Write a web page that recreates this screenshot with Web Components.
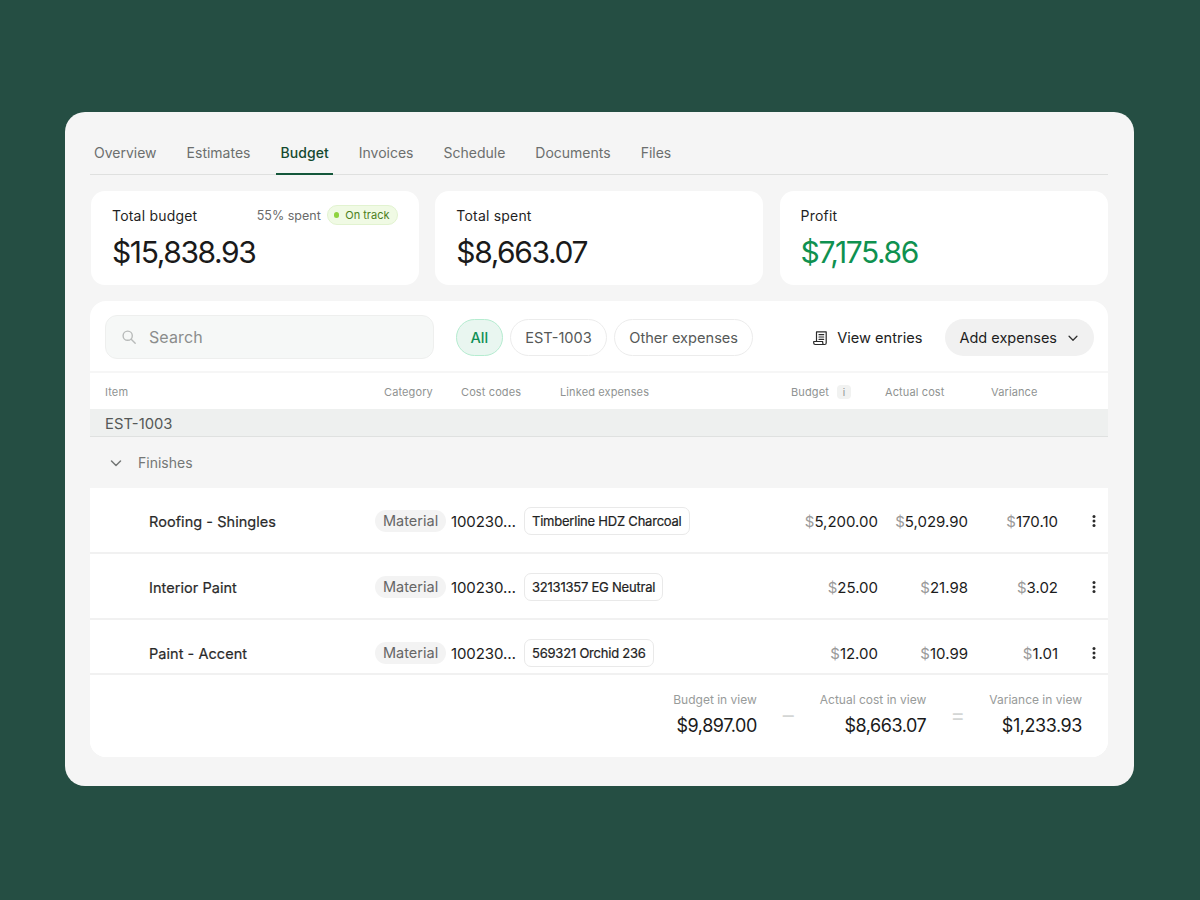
<!DOCTYPE html>
<html lang="en">
<head>
<meta charset="utf-8">
<title>Budget</title>
<style>
  html, body { margin: 0; height: 100%; }
  body {
    background: #254e43;
    font-family: Inter, "Liberation Sans", sans-serif;
    color: #1a1a1a;
    padding: 112px 66px 0 65px;
    box-sizing: border-box;
    height: 900px;
    overflow: hidden;
  }
</style>
</head>
<body>
<budget-panel>
  <tab-bar active="Budget" items="Overview,Estimates,Budget,Invoices,Schedule,Documents,Files"></tab-bar>
  <stat-row>
    <stat-card label="Total budget" value="$15,838.93">
      <span slot="extra">55% spent</span>
      <status-pill slot="extra">On track</status-pill>
    </stat-card>
    <stat-card label="Total spent" value="$8,663.07"></stat-card>
    <stat-card label="Profit" value="$7,175.86" tone="good"></stat-card>
  </stat-row>
  <table-card>
    <expense-toolbar></expense-toolbar>
    <table-head></table-head>
    <group-bar>EST-1003</group-bar>
    <section-row>Finishes</section-row>
    <row-list>
      <expense-row name="Roofing - Shingles" link="Timberline HDZ Charcoal" budget="5,200.00" actual="5,029.90" variance="170.10"></expense-row>
      <expense-row name="Interior Paint" link="32131357 EG Neutral" budget="25.00" actual="21.98" variance="3.02"></expense-row>
      <expense-row name="Paint - Accent" link="569321 Orchid 236" budget="12.00" actual="10.99" variance="1.01"></expense-row>
    </row-list>
    <summary-bar></summary-bar>
  </table-card>
</budget-panel>

<script>
// petit helper pour eviter de repeter le meme constructeur
class Base extends HTMLElement {
  connectedCallback() {
    if (this.shadowRoot) return;
    this.attachShadow({ mode: 'open' });
    this.shadowRoot.innerHTML = this.html();
  }
}

const chevron = (size, color) => `<svg width="${size}" height="${size}" viewBox="0 0 16 16" fill="none" stroke="${color}" stroke-width="1.5" stroke-linecap="round" stroke-linejoin="round"><path d="M3.5 6l4.5 4.5L12.5 6"/></svg>`;

class BudgetPanel extends Base {
  html() {
    return `<style>
      :host { display: block; background: #f5f5f5; border-radius: 20px; width: 1069px; height: 674px; box-sizing: border-box; padding: 20px 26px 0 25px; }
    </style><slot></slot>`;
  }
}

class TabBar extends Base {
  html() {
    const active = this.getAttribute('active');
    const items = this.getAttribute('items').split(',');
    return `<style>
      :host { display: flex; gap: 22px; height: 43px; border-bottom: 1px solid #dfe0df; box-sizing: border-box; }
      .tab { padding: 0 4px; height: 43px; line-height: 42px; font-size: 14px; color: #6c6f6e; box-sizing: border-box; }
      .on { color: #14492f; font-weight: 500; border-bottom: 2px solid #14573a; letter-spacing: .05px; }
    </style>${items.map(t => `<div class="tab ${t === active ? 'on' : ''}">${t}</div>`).join('')}`;
  }
}

class StatRow extends Base {
  html() {
    return `<style>
      :host { display: grid; grid-template-columns: repeat(3, 328px); gap: 16.3px; margin: 16px 0 16px 1px; }
    </style><slot></slot>`;
  }
}

class StatCard extends Base {
  html() {
    const good = this.getAttribute('tone') === 'good';
    return `<style>
      :host { display: block; background: #fff; border-radius: 14px; height: 94px; box-sizing: border-box; padding: 14px 21px 0 21px; }
      .top { display: flex; justify-content: space-between; align-items: center; height: 20px; }
      .label { font-size: 14px; color: #1f1f1f; letter-spacing: .2px; }
      .extra { display: flex; align-items: center; gap: 6px; font-size: 12.5px; color: #6a6a6a; }
      .value { font-size: 30px; line-height: 36px; margin-top: 9px; letter-spacing: -1.4px; color: ${good ? '#0f9150' : '#1a1a1a'}; }
    </style>
    <div class="top"><span class="label">${this.getAttribute('label')}</span><span class="extra"><slot name="extra"></slot></span></div>
    <div class="value">${this.getAttribute('value')}</div>`;
  }
}

class StatusPill extends Base {
  html() {
    return `<style>
      :host { display: inline-flex; align-items: center; gap: 6px; height: 18px; padding: 0 7.5px 0 6px; background: #f0fae4; border: 1px solid #e2f3d0; border-radius: 10px; font-size: 11px; color: #4c7f1c; }
      i { width: 5.5px; height: 5.5px; border-radius: 50%; background: #8fd33f; }
    </style><i></i><slot></slot>`;
  }
}

class TableCard extends Base {
  html() {
    return `<style>
      :host { display: block; background: #fff; border-radius: 16px; height: 456px; overflow: hidden; }
    </style><slot></slot>`;
  }
}

class ExpenseToolbar extends Base {
  html() {
    return `<style>
      :host { display: flex; align-items: center; height: 72px; box-sizing: border-box; padding: 3px 14px 0 15px; border-bottom: 2px solid #f6f6f6; }
      .search { display: flex; align-items: center; gap: 12px; width: 329px; height: 44px; box-sizing: border-box; padding-left: 15px; background: #f6f8f7; border: 1px solid #eeefee; border-radius: 12px; font-size: 16px; color: #8b8d8c; letter-spacing: .1px; margin-top: -1px; }
      .chips { display: flex; gap: 7.5px; margin-left: 22px; }
      .right { display: flex; align-items: center; margin-left: auto; }
      .view { display: flex; align-items: center; gap: 9px; font-size: 14.6px; color: #222; margin-right: 23px; }
      .add { display: flex; align-items: center; height: 37px; padding: 0 14px; background: #f1f1f1; border-radius: 19px; font-size: 14.5px; color: #1e1e1e; gap: 9px; }
    </style>
    <div class="search">
      <svg width="16" height="16" viewBox="0 0 16 16" fill="none" stroke="#b8bbba" stroke-width="1.4" stroke-linecap="round"><circle cx="6.7" cy="6.7" r="4.6"/><path d="M10.2 10.2l4 4"/></svg>
      <span>Search</span>
    </div>
    <div class="chips">
      <filter-chip on>All</filter-chip>
      <filter-chip>EST-1003</filter-chip>
      <filter-chip>Other expenses</filter-chip>
    </div>
    <div class="right">
      <div class="view">
        <svg width="16" height="16" viewBox="0 0 16 16" fill="none" stroke="#2a2a2a" stroke-width="1.2" stroke-linecap="round" stroke-linejoin="round"><path d="M4.5 11.5V1.8h9.7V13c0 .9-.6 1.5-1.5 1.5H3.2c-.9 0-1.5-.6-1.5-1.4v-1.6h9V13c0 .9.7 1.5 1.5 1.5"/><path d="M7 4.7h4.7M7 7h4.7M7 9.3h4.7"/></svg>
        <span>View entries</span>
      </div>
      <div class="add"><span>Add expenses</span>${chevron(14, '#333')}</div>
    </div>`;
  }
}

class FilterChip extends Base {
  html() {
    const on = this.hasAttribute('on');
    return `<style>
      :host { display: inline-flex; align-items: center; height: 37px; box-sizing: border-box; padding: 0 ${on ? 13.5 : 14}px; border-radius: 19px; font-size: 14.6px;
        border: 1px solid ${on ? '#b5ecd0' : '#ececec'}; background: ${on ? '#e9f6f0' : '#fff'}; color: ${on ? '#0f8f55' : '#565958'}; ${on ? 'font-weight:500;' : ''} }
    </style><slot></slot>`;
  }
}

class TableHead extends Base {
  html() {
    return `<style>
      :host { display: grid; grid-template-columns: 279px 77px 99px 231px 94px 106px 1fr; align-items: center; height: 36px; box-sizing: border-box; padding: 1px 0 0 15px; font-size: 11px; letter-spacing: .12px; color: #8f9392; }
      .b { display: flex; align-items: center; gap: 8px; }
      .i { width: 14px; height: 14px; background: #f1f2f1; border-radius: 4px; text-align: center; line-height: 14px; font-size: 10px; color: #8f9392; }
    </style>
    <div>Item</div><div>Category</div><div>Cost codes</div><div>Linked expenses</div>
    <div class="b"><span>Budget</span><span class="i">i</span></div><div>Actual cost</div><div>Variance</div>`;
  }
}

class GroupBar extends Base {
  html() {
    return `<style>
      :host { display: block; height: 28px; line-height: 30px; box-sizing: border-box; padding-left: 15px; background: #eef0ef; border-bottom: 1px solid #dfe1e0; font-size: 14.8px; color: #555857; }
    </style><slot></slot>`;
  }
}

class SectionRow extends Base {
  html() {
    return `<style>
      :host { display: flex; align-items: center; gap: 14px; height: 51px; box-sizing: border-box; padding: 0 0 0 18px; background: #f5f5f5; font-size: 14px; color: #747776; }
    </style>${chevron(16, '#747776')}<span><slot></slot></span>`;
  }
}

class RowList extends Base {
  html() {
    return `<style>
      :host { display: block; height: 186px; overflow: hidden; }
    </style><slot></slot>`;
  }
}

class ExpenseRow extends Base {
  html() {
    const a = this.getAttribute.bind(this);
    const money = v => `<span class="amt"><span class="d">$</span>${a(v)}</span>`;
    return `<style>
      :host { display: grid; grid-template-columns: 226px 76px 73px 264px 90px 90px 90px 1fr; align-items: center; height: 66px; box-sizing: border-box; padding: 2px 0 0 59px; border-bottom: 2px solid #f1f1f1; font-size: 15px; color: #1c1c1c; }
      .name { font-size: 14.5px; letter-spacing: .05px; color: #2a2a2a; -webkit-text-stroke: .2px #2a2a2a; }
      .cat { display: inline-block; height: 22px; line-height: 22px; padding: 0 8px; border-radius: 11px; background: #f3f3f3; color: #666; font-size: 14.5px; }
      .code { font-size: 15px; letter-spacing: -.1px; }
      .link { display: inline-block; height: 28px; line-height: 26px; box-sizing: border-box; padding: 0 7px; border: 1px solid #e9e9e9; border-radius: 7px; font-size: 13px; letter-spacing: -.22px; color: #222; -webkit-text-stroke: .2px #222; white-space: nowrap; }
      .amt { text-align: right; }
      .d { color: #9a9a9a; }
      .more { justify-self: end; margin-right: 6px; display: block; }
    </style>
    <div class="name">${a('name')}</div>
    <div><span class="cat">Material</span></div>
    <div class="code">100230…</div>
    <div><span class="link">${a('link')}</span></div>
    ${money('budget')}${money('actual')}${money('variance')}
    <svg class="more" width="16" height="16" viewBox="0 0 16 16" fill="#2b2b2b"><circle cx="8" cy="3.6" r="1.5"/><circle cx="8" cy="8" r="1.5"/><circle cx="8" cy="12.4" r="1.5"/></svg>`;
  }
}

class SummaryBar extends Base {
  html() {
    const cell = (l, v) => `<div class="cell"><div class="l">${l}</div><div class="v">${v}</div></div>`;
    return `<style>
      :host { display: flex; justify-content: flex-end; box-sizing: border-box; height: 84px; padding: 17px 26px 0 0; border-top: 2px solid #f1f1f1; margin-top: -1px; position: relative; background: #fff; }
      .cell { text-align: right; }
      .l { font-size: 12px; line-height: 16px; color: #989b9a; }
      .v { font-size: 18px; line-height: 22px; margin-top: 7px; letter-spacing: -.45px; color: #1a1a1a; }
      .op { width: 63px; text-align: center; font-size: 22px; line-height: 24px; color: #d4d6d5; padding-top: 11px; }
    </style>
    ${cell('Budget in view', '$9,897.00')}<div class="op">–</div>${cell('Actual cost in view', '$8,663.07')}<div class="op">=</div>${cell('Variance in view', '$1,233.93')}`;
  }
}

customElements.define('budget-panel', BudgetPanel);
customElements.define('tab-bar', TabBar);
customElements.define('stat-row', StatRow);
customElements.define('stat-card', StatCard);
customElements.define('status-pill', StatusPill);
customElements.define('table-card', TableCard);
customElements.define('expense-toolbar', ExpenseToolbar);
customElements.define('filter-chip', FilterChip);
customElements.define('table-head', TableHead);
customElements.define('group-bar', GroupBar);
customElements.define('section-row', SectionRow);
customElements.define('row-list', RowList);
customElements.define('expense-row', ExpenseRow);
customElements.define('summary-bar', SummaryBar);
</script>
</body>
</html>
